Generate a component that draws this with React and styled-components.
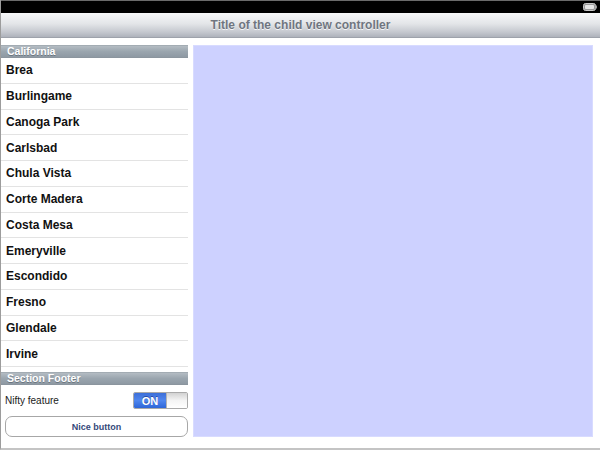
import React from 'react'
import styled, { createGlobalStyle } from 'styled-components'

const GlobalStyle = createGlobalStyle`
  html, body {
    margin: 0;
    padding: 0;
    background: #ffffff;
  }
  body {
    font-family: "Liberation Sans", Arial, sans-serif;
  }
`;

const cities = [
  'Brea', 'Burlingame', 'Canoga Park', 'Carlsbad', 'Chula Vista', 'Corte Madera',
  'Costa Mesa', 'Emeryville', 'Escondido', 'Fresno', 'Glendale', 'Irvine',
];

const App = () => {
  return (
    <>
      <GlobalStyle />
      <Screen>
        <StatusBar>
          <Battery>
            <svg width="14" height="8" viewBox="0 0 14 8">
              <rect x="0.5" y="0.5" width="12" height="7" rx="2" fill="#9a9a9a" stroke="#c8c8c8" />
              <rect x="2" y="2" width="9" height="4" rx="1" fill="#e6e6e6" />
              <rect x="12.5" y="2.5" width="1.5" height="3" fill="#9a9a9a" />
            </svg>
          </Battery>
        </StatusBar>
        <NavBar>
          <NavTitle>Title of the child view controller</NavTitle>
        </NavBar>
        <Content>
          <Sidebar>
            <SectionHeader>California</SectionHeader>
            <List>
              {cities.map((c) => (
                <Row key={c}>{c}</Row>
              ))}
            </List>
            <SectionHeader $gap>Section Footer</SectionHeader>
            <SettingRow>
              <SettingLabel>Nifty feature</SettingLabel>
              <Switch>
                <SwitchOn>ON</SwitchOn>
                <SwitchKnob />
              </Switch>
            </SettingRow>
            <NiceButton>Nice button</NiceButton>
          </Sidebar>
          <Panel />
        </Content>
      </Screen>
    </>
  )
};

export default App;


const Screen = styled.div`
width: 600px;
height: 450px;
box-sizing: border-box;
display: flex;
flex-direction: column;
background: #ffffff;
border-left: 1px solid #9c9c9c;
border-bottom: 2px solid #c4c4c4;
overflow: hidden;
`;
const StatusBar = styled.div`
height: 13px;
flex-shrink: 0;
background: #000;
border-top: 1px solid #6a6a6a;
box-sizing: border-box;
display: flex;
justify-content: flex-end;
align-items: center;
padding-right: 3px;
`;
const Battery = styled.div`
display: flex;
align-items: center;
`;
const NavBar = styled.div`
height: 25px;
flex-shrink: 0;
background: linear-gradient(to bottom, #f7f8f9 0%, #e3e5e8 45%, #c4c7ce 80%, #aeb2bb 100%);
border-bottom: 1px solid #9ea2ab;
box-sizing: border-box;
display: flex;
align-items: center;
justify-content: center;
`;
const NavTitle = styled.div`
font-size: 12px;
font-weight: bold;
color: #6f7580;
text-shadow: 0 1px 0 rgba(255,255,255,0.8);
`;
const Content = styled.div`
flex: 1;
display: flex;
padding: 7px 7px 12px 0;
gap: 5px;
`;
const Sidebar = styled.div`
width: 187px;
display: flex;
flex-direction: column;
`;
const SectionHeader = styled.div`
height: 13px;
box-sizing: border-box;
margin-top: ${(p) => (p.$gap ? '5px' : '0')};
background: linear-gradient(to bottom, #b4bcc3 0%, #9aa5ae 50%, #8e99a3 100%);
border-top: 1px solid #a3acb3;
border-bottom: 1px solid #8b959e;
color: #fff;
font-size: 10.5px;
font-weight: bold;
line-height: 11px;
padding-left: 6px;
text-shadow: 0 1px 0 rgba(80,90,100,0.6);
`;
const List = styled.div`
display: flex;
flex-direction: column;
`;
const Row = styled.div`
height: 25.75px;
box-sizing: border-box;
border-bottom: 1px solid #e3e3e3;
display: flex;
align-items: center;
padding-left: 5px;
font-size: 12px;
font-weight: bold;
color: #111;
`;
const SettingRow = styled.div`
height: 31px;
display: flex;
align-items: center;
justify-content: space-between;
padding-left: 4px;
`;
const SettingLabel = styled.div`
font-size: 10px;
color: #1a1a1a;
`;
const Switch = styled.div`
width: 55px;
height: 17px;
box-sizing: border-box;
border: 1px solid #a9a9a9;
border-radius: 2px;
display: flex;
overflow: hidden;
`;
const SwitchOn = styled.div`
width: 32px;
background: linear-gradient(to bottom, #3d6fd8 0%, #4f86ee 50%, #2e66d8 100%);
color: #fff;
font-size: 11px;
font-weight: bold;
display: flex;
align-items: center;
justify-content: center;
text-shadow: 0 -1px 0 rgba(0,0,60,0.4);
`;
const SwitchKnob = styled.div`
flex: 1;
background: linear-gradient(to bottom, #d2d2d2 0%, #f4f4f4 50%, #ffffff 100%);
border-left: 1px solid #b3b3b3;
`;
const NiceButton = styled.div`
margin-left: 4px;
height: 21px;
box-sizing: border-box;
border: 1px solid #a7a7a7;
border-radius: 7px;
background: #fff;
display: flex;
align-items: center;
justify-content: center;
font-size: 9px;
font-weight: bold;
color: #34497a;
`;
const Panel = styled.div`
flex: 1;
background: #cdd1ff;
border: 1px solid #d8dbff;
`;
